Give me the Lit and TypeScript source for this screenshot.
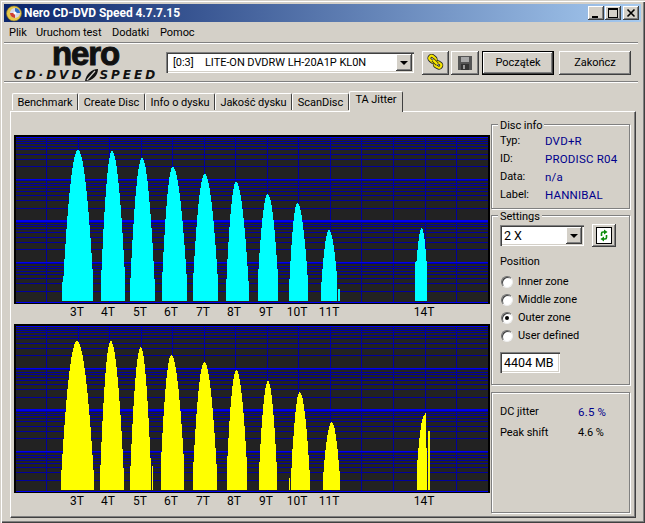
import { LitElement, html, css, svg } from "lit";
import { customElement } from "lit/decorators.js";

type Peak = { c: number; l: number; r: number; top: number; el: number; er: number };
const p = (c: number, l: number, r: number, top: number, el: number, er: number = el): Peak => ({ c, l, r, top, el, er });

const LABELS: [string, number][] = [["3T", 77], ["4T", 108], ["5T", 140], ["6T", 171], ["7T", 203], ["8T", 234], ["9T", 266], ["10T", 297], ["11T", 329], ["14T", 424]];
const VLINES = [46, 78, 109, 141, 172, 204, 235, 267, 298, 330, 361, 393, 425, 456];

const PEAKS_A: Peak[] = [
  p(78, 63, 93, 150, 285, 277), p(112, 101, 125, 151, 282, 277), p(142, 130, 155, 158, 289), p(172.7, 162, 187, 167, 282, 282),
  p(204.7, 193, 218, 174, 282), p(236, 226, 249, 182, 289), p(267.7, 258, 278, 194, 277), p(297.3, 289, 308, 203, 289, 282),
  p(329, 321, 337, 230, 289, 277), p(421.7, 416, 427, 228, 268),
];
const EXTRA_A: [number, number, number][] = [[62, 1, 282], [338, 2, 289], [415, 1, 262]];
const PEAKS_B: Peak[] = [
  p(77, 61, 94, 341, 478), p(110.7, 100, 124, 341, 478), p(140.7, 130, 151, 347, 478, 470), p(171.3, 161, 184, 355, 462),
  p(204.3, 193, 217, 362, 472), p(236.3, 227, 247, 370, 466), p(268, 259, 277, 381, 472), p(299.7, 291, 310, 392, 478),
  p(331.7, 323, 340, 422, 478), p(424.5, 417, 427, 415, 467),
];
const EXTRA_B: [number, number, number][] = [[152, 1, 466], [289, 1, 478], [292, 1, 449], [425, 1, 413], [428, 2, 431]];

function peakPath(k: Peak, base: number, extra: [number, number, number][]) {
  let d = "";
  for (let x = k.l; x < k.r; x++) {
    const dx = x + 0.5 - k.c;
    const w = dx < 0 ? k.c - k.l : k.r - k.c;
    const e = dx < 0 ? k.el : k.er;
    const y = Math.round(k.top + (e - k.top) * Math.pow(Math.abs(dx) / w, 2));
    d += `M${x} ${y}h1V${base}h-1z`;
  }
  return d + extra.map(([x, w, y]) => `M${x} ${y}h${w}V${base}h-${w}z`).join("");
}

function hLines(top: number) {
  const out: { y: number; h: number; major: boolean }[] = [];
  for (let d = 0; d < 4; d++) {
    const Y = top + d * 41.5;
    out.push({ y: Math.round(Y), h: d === 0 ? 1 : 2, major: true });
    for (const n of [9, 8, 7, 6, 5, 4, 3, 2]) {
      out.push({ y: Math.round(Y + 41.5 * (1 - Math.log10(n))), h: 1, major: false });
    }
  }
  return out;
}

function chart(top: number, color: string, peaks: Peak[], extra: [number, number, number][]) {
  const base = top + 166;
  const lines = hLines(top + 2);
  return html`<svg class="chart" width="477" height="189" viewBox="14 ${top} 477 189" shape-rendering="crispEdges">
    <rect x="14" y="${top}" width="476" height="169" fill="#000"></rect>
    <rect x="16" y="${top + 2}" width="472" height="166" fill="#222"></rect>
    ${VLINES.map((x) => svg`<rect x="${x}" y="${top + 2}" width="1" height="166" fill="#0000a0"></rect>`)}
    ${lines.map((l) => svg`<rect x="16" y="${l.y}" width="472" height="${l.h}" fill="${l.major ? "#0000f0" : "#0000a0"}"></rect>`)}
    <rect x="16" y="${top + 167}" width="472" height="1" fill="#0000f0"></rect>
    <path d="${peaks.map((k, i) => peakPath(k, base, i === 0 ? extra : [])).join("")}" fill="${color}"></path>
    ${LABELS.map(([t, x]) => svg`<text x="${x}" y="${top + 181}" text-anchor="middle" class="lbl">${t}</text>`)}
  </svg>`;
}

@customElement("app-root")
export class AppRoot extends LitElement {
  static styles = css`
    :host {
      display: block; width: 645px; height: 523px; box-sizing: border-box; padding: 4px 0 0 4px; overflow: hidden;
      background: #d4d0c8; color: #000; font: 11px/14px Roboto, sans-serif; letter-spacing: -0.05px;
      box-shadow: inset 1px 1px 0 #d4d0c8, inset 2px 2px 0 #fff, inset -1px -1px 0 #404040, inset -2px -2px 0 #808080;
    }
    .title { width: 637px; height: 18px; display: flex; align-items: center; color: #fff; font-weight: 700; font-size: 12px;
      background: linear-gradient(90deg, #0a246a, #a6caf0); }
    .title svg.app { margin: 0 2px 0 2px; }
    .caps { margin-left: auto; display: flex; padding-right: 2px; }
    .cap { width: 16px; height: 14px; margin-left: 1px; background: #d4d0c8; display: flex; align-items: center; justify-content: center;
      box-shadow: inset -1px -1px 0 #404040, inset 1px 1px 0 #fff, inset -2px -2px 0 #808080; }
    .menu { box-sizing: border-box; height: 20px; padding-top: 2px; display: flex; align-items: center; }
    .menu span:nth-child(1) { margin-left: 5px; width: 27px; }
    .menu span:nth-child(2) { width: 76px; }
    .menu span:nth-child(3) { width: 48px; }
    .sep { height: 1px; width: 634px; background: #808080; border-bottom: 1px solid #fff; }
    .head { height: 37px; display: flex; align-items: center; }
    .logo { width: 162px; height: 37px; display: flex; flex-direction: column; align-items: center; color: #111; }
    .nero { font: 700 33px/20px "Liberation Sans", sans-serif; letter-spacing: -1.1px; -webkit-text-stroke: 1px #111; height: 24px; margin-left: 1px; }
    .speed { display: flex; align-items: center; height: 12px; margin-top: 1px; font: italic 700 12px/12px "DejaVu Sans", sans-serif; letter-spacing: 3px; white-space: nowrap; margin-left: 2px; }
    .sel { box-sizing: border-box; background: #fff; display: flex; align-items: center;
      box-shadow: inset 1px 1px 0 #808080, inset 2px 2px 0 #404040, inset -1px -1px 0 #fff, inset -2px -2px 0 #d4d0c8; }
    .drive { width: 248px; height: 21px; padding-left: 7px; }
    .drive .port { width: 32px; }
    .arrow { margin-left: auto; margin-right: 2px; width: 16px; height: 17px; background: #d4d0c8; display: flex; align-items: center; justify-content: center;
      box-shadow: inset -1px -1px 0 #404040, inset 1px 1px 0 #fff, inset -2px -2px 0 #808080; }
    .arrow i { border: 4px solid transparent; border-top: 4px solid #000; border-bottom: 0; }
    .btn { box-sizing: border-box; height: 24px; display: flex; align-items: center; justify-content: center; background: #d4d0c8;
      box-shadow: inset -1px -1px 0 #404040, inset 1px 1px 0 #fff, inset -2px -2px 0 #808080; }
    .b1 { width: 27px; margin-left: 8px; }
    .b2 { width: 28px; margin-left: 2px; }
    .b3 { width: 72px; margin-left: 3px; border: 1px solid #000; }
    .b4 { width: 72px; margin-left: 5px; }
    .tabs { height: 28px; margin-left: 8px; display: flex; align-items: flex-end; position: relative; z-index: 1; }
    .tab { box-sizing: border-box; height: 17px; margin-bottom: 1px; padding-top: 1px; background: #d4d0c8; display: flex; align-items: center; justify-content: center;
      border-top: 1px solid #fff; border-left: 1px solid #fff; border-right: 1px solid #404040; border-radius: 2px 2px 0 0; }
    .tab.on { height: 21px; margin-bottom: -1px; padding: 0 0 4px; }
    .pane { box-sizing: border-box; width: 626px; height: 407px; margin-left: 6px; padding: 0 0 0 3px; display: flex;
      border-top: 1px solid #fff; border-left: 1px solid #fff; border-right: 1px solid #404040; border-bottom: 1px solid #404040;
      box-shadow: inset -1px -1px 0 #808080; }
    .charts { width: 477px; padding-top: 23px; display: flex; flex-direction: column; }
    .chart { display: block; }
    .lbl { font: 12px Roboto, sans-serif; fill: #000; }
    .side { width: 140px; padding-top: 12px; display: flex; flex-direction: column; }
    .box { box-sizing: border-box; width: 139px; padding-left: 8px; border: 1px solid #808080; box-shadow: 1px 1px 0 #fff, inset 1px 1px 0 #fff; }
    .lg { display: block; width: fit-content; height: 13px; line-height: 13px; margin: -6px 0 0 -2px; padding: 0 2px; background: #d4d0c8; }
    .info { height: 85px; }
    .rows { display: grid; grid-template-columns: 45px 1fr; grid-auto-rows: 18px; align-items: center; }
    .v { color: #00008c; font-size: 11.5px; letter-spacing: 0.2px; }
    .sets { height: 170px; margin-top: 6px; }
    .speedrow { display: flex; align-items: center; margin-top: 2px; height: 21px; }
    .sp { width: 84px; height: 21px; padding-left: 4px; font-size: 12.5px; }
    .rf { width: 24px; height: 23px; margin-left: 8px; }
    .rf svg { display: block; }
    .pos { margin-top: 9px; height: 14px; }
    .radios { margin-top: 4px; }
    .radio { height: 18px; display: flex; align-items: center; margin-left: 1px; line-height: 16px; }
    .dot { box-sizing: border-box; width: 12px; height: 12px; margin-right: 5px; border-radius: 50%; background: #fff; display: flex; align-items: center; justify-content: center;
      border: 1px solid; border-color: #707070 #eee #eee #707070; box-shadow: inset 1px 1px 0 #404040; }
    .dot.on::after { content: ""; width: 4px; height: 4px; border-radius: 50%; background: #000; }
    .mb { width: 60px; height: 21px; margin-top: 7px; padding-left: 4px; font-size: 12.5px; }
    .res { height: 121px; margin-top: 7px; padding-top: 8px; }
    .res .rows { grid-template-columns: 78px 1fr; grid-auto-rows: 21px; }
  `;

  render() {
    return html`
      <div class="title">
        <svg class="app" width="16" height="17" viewBox="0 0 16 17">
          <circle cx="8" cy="8.5" r="7.5" fill="#e6c84a" stroke="#8a7420" stroke-width=".6"></circle>
          <circle cx="9" cy="8" r="5" fill="#d8d8e8"></circle>
          <path d="M9 3a5 5 0 0 1 5 5H9z" fill="#3070c8"></path><path d="M4 8a5 5 0 0 0 5 5V8z" fill="#d04030"></path>
          <circle cx="9" cy="8" r="1.6" fill="#fff"></circle>
        </svg>
        <span>Nero CD-DVD Speed 4.7.7.15</span>
        <div class="caps">
          <div class="cap"><svg width="10" height="10" viewBox="0 0 10 10" shape-rendering="crispEdges"><rect x="1" y="8" width="6" height="2"></rect></svg></div>
          <div class="cap"><svg width="10" height="10" viewBox="0 0 10 10" shape-rendering="crispEdges"><path d="M0 0h10v10H0zM1 2v7h8V2z" fill-rule="evenodd"></path></svg></div>
          <div class="cap" style="margin-left:2px"><svg width="10" height="10" viewBox="0 0 10 10"><path d="M1.5 1.5l7 7M8.5 1.5l-7 7" stroke="#000" stroke-width="1.6"></path></svg></div>
        </div>
      </div>
      <div class="menu"><span>Plik</span><span>Uruchom test</span><span>Dodatki</span><span>Pomoc</span></div>
      <div class="sep"></div>
      <div class="head">
        <div class="logo">
          <div class="nero">nero</div>
          <div class="speed"><span>CD·DVD</span>
            <svg width="15" height="12" viewBox="0 0 15 12"><path d="M1 12C2 6 7 0 14 0c0 6-5 12-13 12z" fill="#111"></path><path d="M3 11L11 2" stroke="#d4d0c8" stroke-width="1.2"></path></svg>
            <span>SPEED</span></div>
        </div>
        <div class="sel drive"><span class="port">[0:3]</span><span>LITE-ON DVDRW LH-20A1P KL0N</span><div class="arrow"><i></i></div></div>
        <div class="btn b1"><svg width="17" height="17" viewBox="0 0 20 20">
          <g fill="none" stroke="#f5e400" stroke-width="2.6">
            <rect x="2.500" y="3" width="8" height="5.500" rx="2.700" transform="rotate(40 6.500 5.700)" stroke="#222" stroke-width="4.600"></rect>
            <rect x="9" y="10" width="8" height="5.500" rx="2.700" transform="rotate(30 13 12.700)" stroke="#222" stroke-width="4.600"></rect>
            <rect x="2.500" y="3" width="8" height="5.500" rx="2.700" transform="rotate(40 6.500 5.700)"></rect>
            <rect x="9" y="10" width="8" height="5.500" rx="2.700" transform="rotate(30 13 12.700)"></rect>
            <path d="M7 7l5 5" stroke="#222" stroke-width="4.600"></path>
            <path d="M7 7l5 5" stroke-width="2.800"></path>
          </g></svg></div>
        <div class="btn b2"><svg width="16" height="16" viewBox="0 0 16 16" shape-rendering="crispEdges">
          <path d="M1 1h13l1 1v13H1z" fill="#555"></path><rect x="4" y="2" width="8" height="5" fill="#a8a8a8"></rect><rect x="4" y="9" width="8" height="6" fill="#333"></rect><rect x="6" y="10" width="2" height="4" fill="#999"></rect></svg></div>
        <div class="btn b3">Początek</div>
        <div class="btn b4">Zakończ</div>
      </div>
      <div class="sep"></div>
      <div class="tabs">
        <div class="tab" style="width:66px">Benchmark</div>
        <div class="tab" style="width:67px">Create Disc</div>
        <div class="tab" style="width:70px">Info o dysku</div>
        <div class="tab" style="width:77px">Jakość dysku</div>
        <div class="tab" style="width:57px">ScanDisc</div>
        <div class="tab on" style="width:54px">TA Jitter</div>
      </div>
      <div class="pane">
        <div class="charts">
          ${chart(135, "#00ffff", PEAKS_A, EXTRA_A)}
          ${chart(324, "#ffff00", PEAKS_B, EXTRA_B)}
        </div>
        <div class="side">
          <div class="box info">
            <span class="lg">Disc info</span>
            <div class="rows">
              <span>Typ:</span><span class="v">DVD+R</span>
              <span>ID:</span><span class="v">PRODISC R04</span>
              <span>Data:</span><span class="v">n/a</span>
              <span>Label:</span><span class="v">HANNIBAL</span>
            </div>
          </div>
          <div class="box sets">
            <span class="lg">Settings</span>
            <div class="speedrow">
              <div class="sel sp"><span>2 X</span><div class="arrow"><i></i></div></div>
              <div class="btn rf"><svg width="16" height="17" viewBox="0 0 16 17">
                <rect x=".5" y=".5" width="15" height="16" fill="#fff" stroke="#000"></rect>
                <path d="M5.500 9V6.500Q5.500 5 7 5h1.500" fill="none" stroke="#0a8a0a" stroke-width="1.600"></path><path d="M8 2.500L11.500 5 8 7.500z" fill="#0a8a0a"></path>
                <path d="M10.500 8v2.500Q10.500 12 9 12H7.500" fill="none" stroke="#0a8a0a" stroke-width="1.600"></path><path d="M8 9.500L4.500 12 8 14.500z" fill="#0a8a0a"></path></svg></div>
            </div>
            <div class="pos">Position</div>
            <div class="radios">
              <div class="radio"><span class="dot"></span>Inner zone</div>
              <div class="radio"><span class="dot"></span>Middle zone</div>
              <div class="radio"><span class="dot on"></span>Outer zone</div>
              <div class="radio"><span class="dot"></span>User defined</div>
            </div>
            <div class="sel mb">4404 MB</div>
          </div>
          <div class="box res">
            <div class="rows">
              <span>DC jitter</span><span class="v">6.5 %</span>
              <span>Peak shift</span><span class="k">4.6 %</span>
            </div>
          </div>
        </div>
      </div>
    `;
  }
}
